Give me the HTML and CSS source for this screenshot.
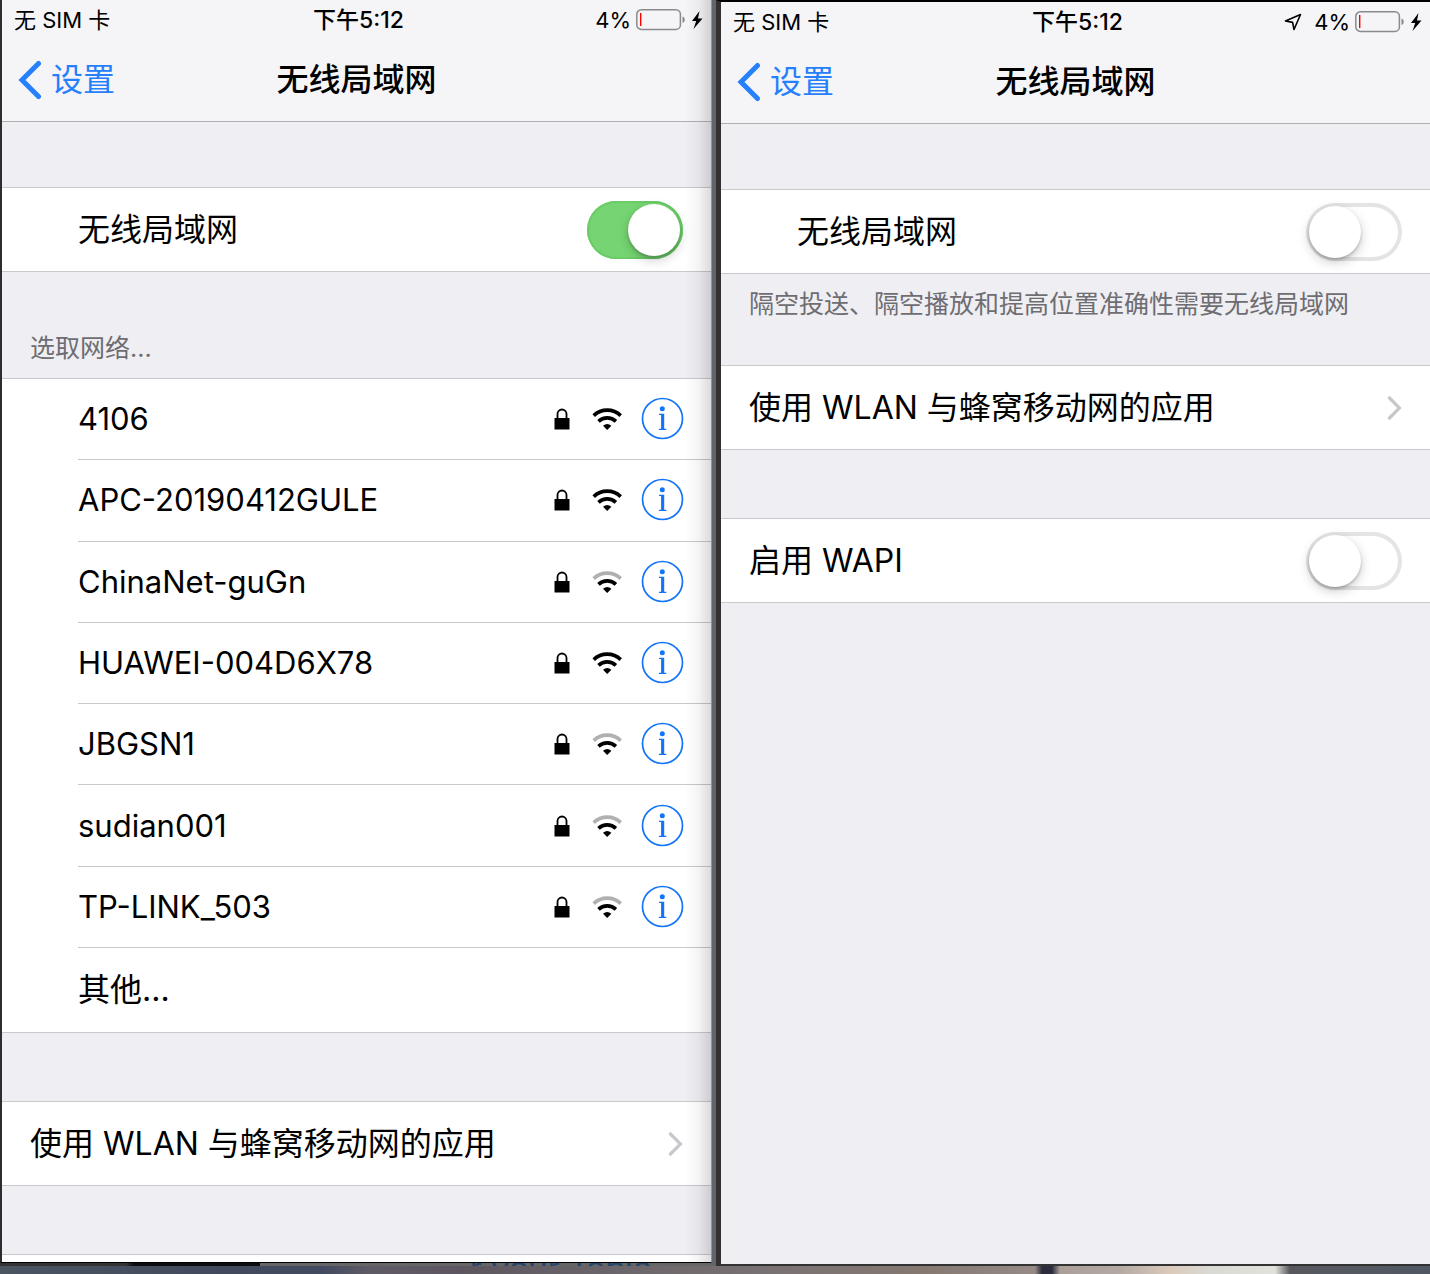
FILE: index.html
```html
<!DOCTYPE html>
<html lang="zh-CN">
<head>
<meta charset="utf-8">
<meta name="viewport" content="width=device-width, initial-scale=1">
<title>无线局域网</title>
<link rel="stylesheet" href="styles.css">
</head>
<body>
<svg class="sprite" aria-hidden="true">
  <symbol id="back" viewBox="0 0 24 40"><path d="M20.500 3.500 4 20l16.500 16.500" fill="none" stroke="currentColor" stroke-width="5" stroke-linecap="round" stroke-linejoin="miter"/></symbol>
  <symbol id="chevron" viewBox="0 0 16 26"><path d="M2.500 2l11 11-11 11" fill="none" stroke="currentColor" stroke-width="3.200"/></symbol>
  <symbol id="lock" viewBox="0 0 16 22"><path d="M3.500 11V6a4.500 4.500 0 0 1 9 0v5" fill="none" stroke="currentColor" stroke-width="1.800"/><path d="M.5 10h15v11.500H.5z" fill="currentColor"/></symbol>
  <symbol id="wifi-mid" viewBox="0 0 30 22"><path d="M6.500 13.400a12.600 12.600 0 0 1 17.400 0" fill="none" stroke="currentColor" stroke-width="3.600"/><path d="M15.200 22l-4.200-4.200a6.500 6.500 0 0 1 8.400 0z" fill="currentColor"/></symbol>
  <symbol id="wifi-top" viewBox="0 0 30 22"><path d="M1.700 7.600a19.500 19.500 0 0 1 27 0" fill="none" stroke="currentColor" stroke-width="3.600"/></symbol>
  <symbol id="info" viewBox="0 0 42 42"><circle cx="21.500" cy="20.500" r="20" fill="none" stroke="currentColor" stroke-width="1.700"/><circle cx="21.300" cy="10.800" r="2.500" fill="currentColor"/><path d="M18 15.800h5.200v15h2.100v1.200h-7.400v-1.200h2.200V17.100H18z" fill="currentColor"/></symbol>
  <symbol id="battery" viewBox="0 0 50 22"><rect x=".8" y=".8" width="43.600" height="19.600" rx="4.500" fill="none" stroke="#8a8a8c" stroke-width="1.500"/><path class="charge" d="M4 4h1.400v13H4z"/><path d="M46.500 7.500c3 1 3 5.500 0 6.500z" fill="#8a8a8c"/></symbol>
  <symbol id="bolt" viewBox="0 0 12 18"><path d="M8.500 0L1 10h4.200L2.500 18 11.500 7.500H7z" fill="currentColor"/></symbol>
  <symbol id="location" viewBox="0 0 18 18"><path d="M1.500 8 16.500 1.500 10 16.500 8.600 9.400z" fill="none" stroke="currentColor" stroke-width="1.600" stroke-linejoin="round"/></symbol>
</svg>
<div class="desktop">
  <div class="windows">
    <div class="column">
      <main class="phone phone-front">
        <header class="bar">
          <div class="status">
            <span>无 SIM 卡</span>
            <time class="clock">下午5:12</time>
            <span class="power">4%<svg class="battery"><use href="#battery"/></svg><svg class="bolt"><use href="#bolt"/></svg></span>
          </div>
          <nav class="nav">
            <a class="back" href="#settings"><svg class="back-icon"><use href="#back"/></svg>设置</a>
            <h1 class="title">无线局域网</h1>
          </nav>
        </header>
        <section class="group group-first">
          <label class="row row-inset">无线局域网<input class="switch" type="checkbox" role="switch" checked></label>
        </section>
        <h2 class="list-title">选取网络...</h2>
        <section class="group">
          <ul class="networks">
            <li class="network"><span class="name">4106</span><svg class="lock"><use href="#lock"/></svg><svg class="wifi"><use href="#wifi-top"/><use href="#wifi-mid"/></svg><button class="info" type="button" aria-label="4106"><svg><use href="#info"/></svg></button></li>
            <li class="network"><span class="name">APC-20190412GULE</span><svg class="lock"><use href="#lock"/></svg><svg class="wifi"><use href="#wifi-top"/><use href="#wifi-mid"/></svg><button class="info" type="button" aria-label="APC-20190412GULE"><svg><use href="#info"/></svg></button></li>
            <li class="network"><span class="name">ChinaNet-guGn</span><svg class="lock"><use href="#lock"/></svg><svg class="wifi"><use class="weak" href="#wifi-top"/><use href="#wifi-mid"/></svg><button class="info" type="button" aria-label="ChinaNet-guGn"><svg><use href="#info"/></svg></button></li>
            <li class="network"><span class="name">HUAWEI-004D6X78</span><svg class="lock"><use href="#lock"/></svg><svg class="wifi"><use href="#wifi-top"/><use href="#wifi-mid"/></svg><button class="info" type="button" aria-label="HUAWEI-004D6X78"><svg><use href="#info"/></svg></button></li>
            <li class="network"><span class="name">JBGSN1</span><svg class="lock"><use href="#lock"/></svg><svg class="wifi"><use class="weak" href="#wifi-top"/><use href="#wifi-mid"/></svg><button class="info" type="button" aria-label="JBGSN1"><svg><use href="#info"/></svg></button></li>
            <li class="network"><span class="name">sudian001</span><svg class="lock"><use href="#lock"/></svg><svg class="wifi"><use class="weak" href="#wifi-top"/><use href="#wifi-mid"/></svg><button class="info" type="button" aria-label="sudian001"><svg><use href="#info"/></svg></button></li>
            <li class="network"><span class="name">TP-LINK_503</span><svg class="lock"><use href="#lock"/></svg><svg class="wifi"><use class="weak" href="#wifi-top"/><use href="#wifi-mid"/></svg><button class="info" type="button" aria-label="TP-LINK_503"><svg><use href="#info"/></svg></button></li>
          </ul>
          <button class="row row-inset row-other" type="button">其他...</button>
        </section>
        <section class="group group-spaced">
          <a class="row" href="#apps">使用 WLAN 与蜂窝移动网的应用<svg class="chevron"><use href="#chevron"/></svg></a>
        </section>
        <section class="group group-spaced group-cut"></section>
      </main>
      <div class="peek"><p class="peek-text">r your Table</p></div>
    </div>
    <main class="phone phone-back">
      <header class="bar">
        <div class="status">
          <span>无 SIM 卡</span>
          <time class="clock">下午5:12</time>
          <span class="power"><svg class="location"><use href="#location"/></svg>4%<svg class="battery"><use href="#battery"/></svg><svg class="bolt"><use href="#bolt"/></svg></span>
        </div>
        <nav class="nav">
          <a class="back" href="#settings"><svg class="back-icon"><use href="#back"/></svg>设置</a>
          <h1 class="title">无线局域网</h1>
        </nav>
      </header>
      <section class="group group-first">
        <label class="row row-inset">无线局域网<input class="switch" type="checkbox" role="switch"></label>
      </section>
      <p class="note">隔空投送、隔空播放和提高位置准确性需要无线局域网</p>
      <section class="group">
        <a class="row" href="#apps">使用 WLAN 与蜂窝移动网的应用<svg class="chevron"><use href="#chevron"/></svg></a>
      </section>
      <section class="group group-spaced">
        <label class="row">启用 WAPI<input class="switch" type="checkbox" role="switch"></label>
      </section>
    </main>
  </div>
</div>
</body>
</html>
```
FILE: styles.css
```css
* { box-sizing: border-box; }

body {
  margin: 0;
  font-family: Inter, "Noto Sans CJK SC", sans-serif;
  font-size: 32px;
  line-height: 40px;
  color: #000;
}

.sprite { position: absolute; width: 0; height: 0; }
svg { display: block; flex: none; }
h1, h2, p, ul { margin: 0; padding: 0; font-weight: 400; }
a { color: inherit; text-decoration: none; }

.desktop {
  min-height: 100vh;
  padding-bottom: 8px;
  background:
    linear-gradient(90deg, #4b5461 0, #414a5d 230px, #414a60 320px, #5f5b66 370px, #5d5660 460px, #6b666b 620px, #7a7273 780px, #857871 920px, #958a86 1035px, #2b2d3c 1042px, #2b2d3c 1052px, #aa9f99 1060px, #b4a9a4 1120px, #dccabb 1170px, #d9dad4 1210px, #e2e2dc 1275px, #57585e 1290px, #515864 1430px) bottom / 100% 8px no-repeat,
    #61656d;
}

.windows {
  display: grid;
  grid-template-columns: minmax(0, 712fr) minmax(0, 714fr);
  gap: 4px;
  min-height: calc(100vh - 8px);
}

.phone { background: #efeef3; }
.phone-front {
  position: relative;
  border-left: 2px solid #2d2d2f;
  border-right: 1px solid #929395;
  border-bottom: 1px solid #000;
}
/* the neighbouring window throws its shade over this edge */
.phone-front::after {
  content: "";
  position: absolute;
  inset: 0 0 0 auto;
  width: 26px;
  background: linear-gradient(90deg, transparent, rgba(0, 0, 0, .04) 50%, rgba(0, 0, 0, .14));
  pointer-events: none;
}
.phone-back {
  border-top: 2px solid #000;
  border-left: 5px solid #323130;
  border-bottom: 2px solid #333;
}

/* sliver of the page lying under the front window */
.peek {
  height: 3px;
  padding-left: 470px;
  overflow: hidden;
  background: linear-gradient(90deg, #333 0, #333 126px, #0b0d11 134px, #0b0d11 260px, #666 260px);
}
.peek-text {
  margin-top: -14px;
  font-family: "Liberation Sans", sans-serif;
  font-size: 35px;
  color: #25456b;
  white-space: nowrap;
}

.bar { background: #f5f5f7; border-bottom: 1px solid #b0b0b3; }
.status, .nav { display: grid; grid-template-columns: 1fr auto 1fr; align-items: center; }
.status { height: 40px; padding: 0 8px 0 12px; font-size: 22px; }
.clock { font-size: 23px; font-weight: 500; }
.power { display: flex; align-items: center; justify-content: flex-end; }
.battery { width: 50px; height: 22px; margin: 0 5px; }
.charge { fill: #f00; }
.bolt { width: 12px; height: 18px; }
.location { width: 18px; height: 18px; margin-right: 12px; }
.nav { height: 81px; padding: 0 16px 2px; }
.back { display: flex; align-items: center; gap: 9px; color: #2680fb; }
.back-icon { width: 24px; height: 40px; }
.title { font-size: 32px; font-weight: 500; }

.group { background: #fff; border: solid #c9c8cd; border-width: 1px 0; }
.group-first { margin-top: 65px; }
.group-spaced { margin-top: 68px; }
.group-cut { height: 8px; border-bottom: 0; }

.row {
  display: flex;
  align-items: center;
  justify-content: space-between;
  width: 100%;
  height: 83px;
  padding: 0 28px;
  border: 0;
  background: none;
  font: inherit;
  color: inherit;
  text-align: left;
}
.row-inset { padding-left: 76px; }
.row-other { height: 84px; }
.chevron { width: 16px; height: 26px; color: #c7c7cc; }

.list-title { padding: 56px 28px 10px; font-size: 25px; color: #6d6d72; }
.note { height: 91px; padding: 10px 28px; font-size: 25px; color: #6d6d72; }

.networks {
  display: grid;
  grid-auto-rows: 1fr;
  min-height: 569px;
  margin-left: 76px;
  list-style: none;
}
.network {
  display: flex;
  align-items: center;
  padding-right: 28px;
  border-bottom: 1px solid #c9c8cd;
}
.name { flex: 1; font-size: 31px; }
.lock { width: 16px; height: 22px; margin-right: 22px; }
.wifi { width: 30px; height: 22px; margin-right: 19px; }
.weak { color: #b0b0b0; }
.info { padding: 0; border: 0; background: none; color: #1274fa; }
.info svg { width: 42px; height: 42px; overflow: visible; }
#info { overflow: visible; }

.switch {
  appearance: none;
  display: flex;
  width: 96px;
  height: 58px;
  margin: 0;
  padding: 3px;
  border-radius: 29px;
  background: #fff;
  box-shadow: inset 0 0 0 4px #e4e4e4;
}
.switch::before {
  content: "";
  width: 52px;
  height: 52px;
  border-radius: 50%;
  background: #fff;
  box-shadow: 0 4px 12px rgba(0, 0, 0, .2), 0 2px 3px rgba(0, 0, 0, .2);
}
.switch:checked { justify-content: flex-end; background: #76d572; box-shadow: inset 0 0 0 2px #6acb67; }
```
